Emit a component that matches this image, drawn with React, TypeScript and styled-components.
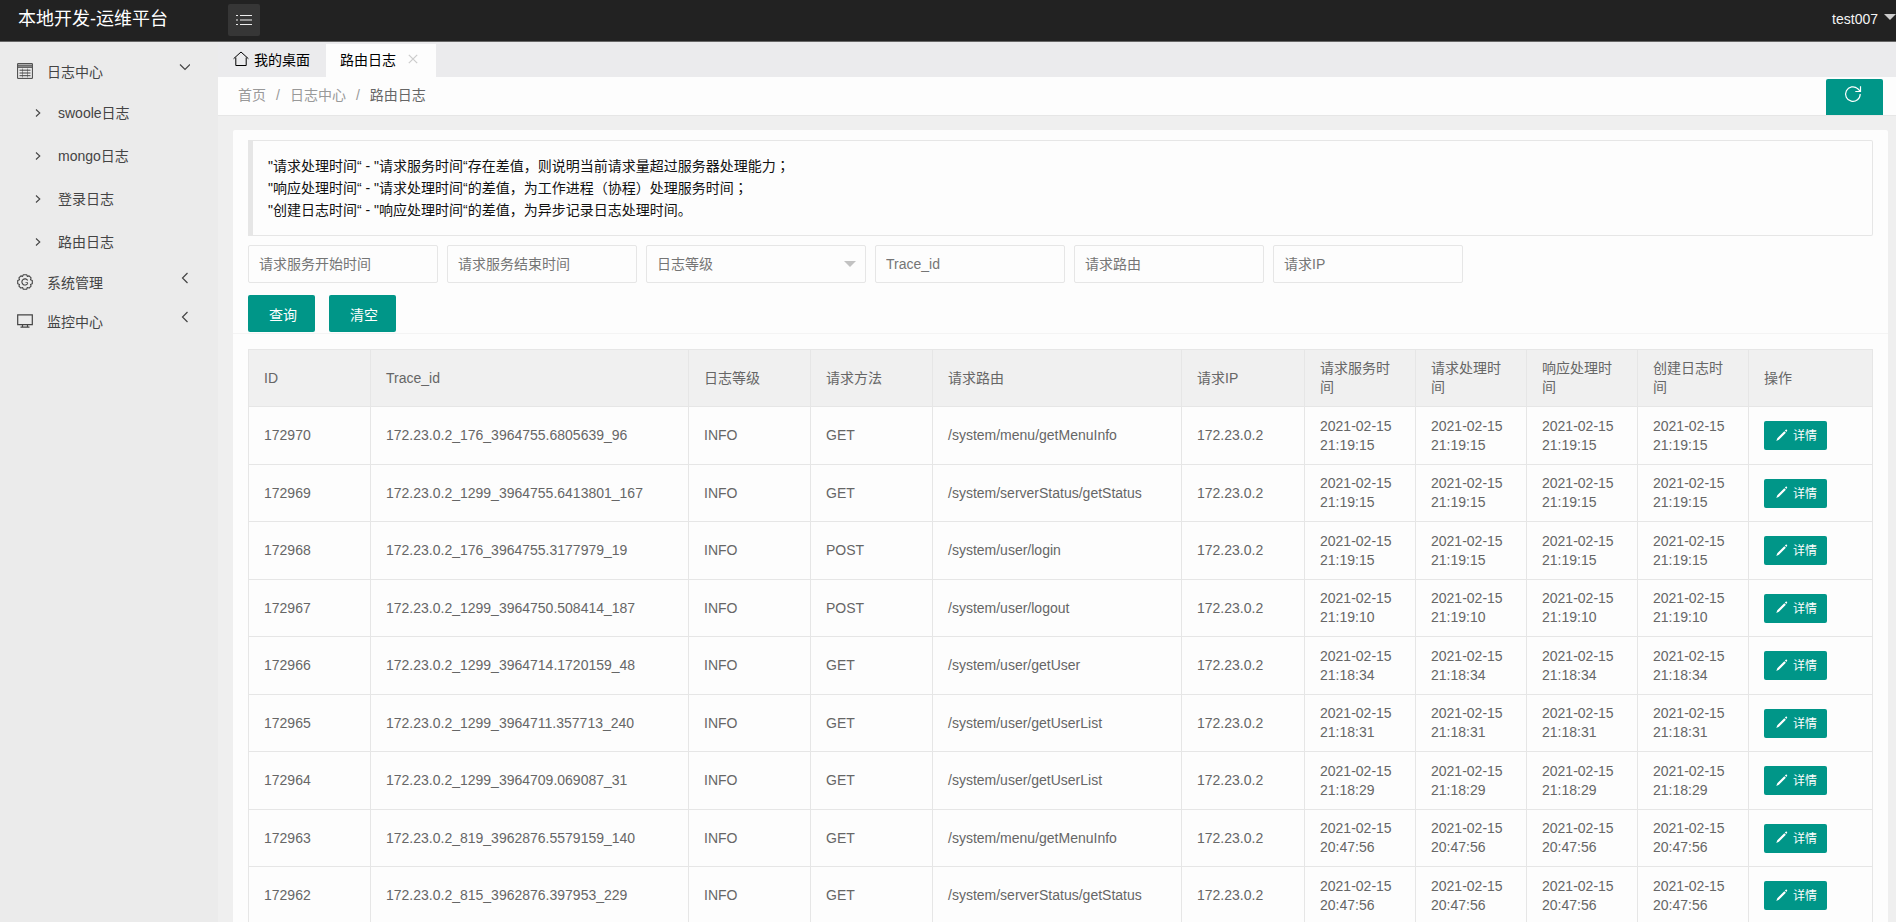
import React from 'react';
import styled, { createGlobalStyle } from 'styled-components';

const GlobalStyle = createGlobalStyle`
  * { box-sizing: border-box; }
  html, body { margin: 0; padding: 0; }
  body, button, input, select {
    font-family: 'Liberation Sans', 'Noto Sans CJK SC', sans-serif;
    font-size: 14px;
  }
  body { background: #efefef; color: #666; overflow: hidden; }
  a { color: inherit; text-decoration: none; }
  ul { list-style: none; margin: 0; padding: 0; }
`;

const teal = '#009688';
const line = '#e6e6e6';

const Page = styled.div`
  display: flex;
  flex-direction: column;
  height: 100vh;
`;

const Header = styled.header`
  display: flex;
  align-items: flex-start;
  flex: none;
  height: 42px;
  background: #222;
  border-bottom: 1px solid #666;
  color: #fff;
`;

const Brand = styled.h1`
  width: 228px;
  margin: 0;
  padding-left: 18px;
  font-size: 18px;
  font-weight: 400;
  line-height: 38px;
`;

const MenuToggle = styled.button`
  display: flex;
  align-items: center;
  justify-content: center;
  width: 32px;
  height: 32px;
  margin-top: 4px;
  padding: 0;
  border: 0;
  border-radius: 2px;
  background: #363636;
  color: #eee;
`;

const UserMenu = styled.button`
  display: flex;
  align-items: center;
  gap: 6px;
  height: 38px;
  margin-left: auto;
  padding: 0;
  border: 0;
  background: none;
  color: #f4f4f4;
`;

const Caret = styled.span<{ $color: string; $raised?: boolean }>`
  border: 6px solid transparent;
  border-top-color: ${(p) => p.$color};
  border-bottom-width: 0;
  margin-bottom: ${(p) => (p.$raised ? 4 : 0)}px;
`;

const Body = styled.div`
  display: flex;
  flex: 1;
  min-height: 0;
`;

const Sidebar = styled.nav`
  flex: none;
  width: 218px;
  padding-top: 9px;
  background: #ebebeb;
  color: #444;
`;

const MenuLink = styled.a`
  display: flex;
  align-items: center;
  height: 39px;
  padding: 0 28px 0 17px;
`;

const MenuText = styled.span`
  flex: 1;
  padding-left: 14px;
`;

const MenuChevron = styled.span`
  display: flex;
  padding-bottom: 8px;
`;

const SubLink = styled.a`
  display: flex;
  align-items: center;
  gap: 17px;
  height: 43px;
  padding-left: 35px;
`;

const Content = styled.div`
  display: flex;
  flex: 1;
  flex-direction: column;
  min-width: 0;
`;

const Tabs = styled.div`
  display: flex;
  flex: none;
  align-items: flex-end;
  height: 35px;
  background: #ebebed;
  color: #000;
`;

const Tab = styled.button<{ $active?: boolean }>`
  display: flex;
  align-items: center;
  gap: ${(p) => (p.$active ? 12 : 5)}px;
  height: 33px;
  padding: 0 ${(p) => (p.$active ? 18 : 16)}px 4px ${(p) => (p.$active ? 14 : 15)}px;
  border: 0;
  background: ${(p) => (p.$active ? '#fdfdfd' : 'transparent')};
  color: #000;
`;

const Crumbs = styled.div`
  display: flex;
  flex: none;
  align-items: flex-end;
  justify-content: space-between;
  height: 39px;
  padding: 0 13px 0 20px;
  background: #fdfdfd;
  border-bottom: 1px solid ${line};
`;

const Trail = styled.nav`
  display: flex;
  gap: 10px;
  height: 38px;
  line-height: 36px;
  color: #999;
`;

const CurrentCrumb = styled.span`
  color: #666;
`;

const RefreshButton = styled.button`
  display: flex;
  align-items: center;
  justify-content: center;
  width: 57px;
  height: 36px;
  padding: 0 3px 6px 0;
  border: 0;
  border-radius: 2px 2px 0 0;
  background: ${teal};
  color: #fff;
`;

const Main = styled.main`
  flex: 1;
  min-height: 0;
  overflow: hidden;
  padding: 14px 8px 0 15px;
`;

const Card = styled.section`
  border-radius: 2px;
  background: #fdfdfd;
`;

const Note = styled.blockquote`
  margin: 0;
  padding: 14px 15px;
  border: 1px solid ${line};
  border-left-width: 5px;
  border-radius: 0 2px 2px 0;
  line-height: 22px;
  color: #111;
`;

const Semicolon = styled.span`
  font-family: 'Noto Sans CJK JP', sans-serif;
  line-height: 1;
`;

const CardTop = styled.div`
  padding: 10px 15px 1px;
  border-bottom: 1px solid #f4f4f4;
`;

const SearchForm = styled.form`
  margin-top: 9px;
`;

const Fields = styled.div`
  display: flex;
  flex-wrap: wrap;
  gap: 9px;
`;

const Field = styled.input`
  width: 190px;
  height: 38px;
  padding: 0 10px;
  border: 1px solid ${line};
  border-radius: 2px;
  background: #fdfdfd;
  outline: 0;
  &::placeholder { color: #757575; opacity: 1; }
`;

const SelectBox = styled.div`
  display: grid;
  width: 220px;
  align-items: center;
  & > * { grid-area: 1 / 1; }
  & > span { justify-self: end; margin-right: 10px; pointer-events: none; }
`;

const Select = styled.select`
  width: 100%;
  height: 38px;
  padding: 0 10px;
  border: 1px solid ${line};
  border-radius: 2px;
  background: #fdfdfd;
  color: #757575;
  appearance: none;
`;

const Actions = styled.div`
  display: flex;
  gap: 14px;
  margin-top: 12px;
`;

const ActionButton = styled.button`
  height: 37px;
  padding: 0 18px 0 21px;
  border: 0;
  border-radius: 2px;
  background: ${teal};
  color: #fff;
`;

const CardBody = styled.div`
  padding: 15px;
`;

const Table = styled.table`
  width: 100%;
  table-layout: fixed;
  border-collapse: collapse;
  line-height: 19px;

  th, td {
    padding: 0 15px;
    border: 1px solid ${line};
    text-align: left;
    font-weight: 400;
  }
  thead tr { height: 57px; background: #f0f0f0; }
  tbody tr { height: 57px; }
  tbody tr:nth-child(odd) { height: 58px; }
`;

const DetailButton = styled.button`
  display: flex;
  align-items: center;
  gap: 5px;
  height: 29px;
  padding: 0 10px 2px 12px;
  border: 0;
  border-radius: 2px;
  background: ${teal};
  color: #fff;
  font-size: 12px;
`;

const Stroke = ({ w, h, d, sw = 1 }: { w: number; h: number; d: string; sw?: number }) => (
  <svg width={w} height={h} viewBox={`0 0 ${w} ${h}`} fill="none" stroke="currentColor" strokeWidth={sw} aria-hidden="true">
    <path d={d} />
  </svg>
);

const ListIcon = () => <Stroke w={16} h={12} d="M0 1.5h2M4 1.5h12M0 6h2M4 6h12M0 10.5h2M4 10.5h12" sw={1.2} />;
const HomeIcon = () => <Stroke w={16} h={16} d="M.6 7.700 8 1l7.400 6.700M2.800 6.500v8h10.400v-8" />;
const CloseIcon = () => (
  <svg width="10" height="10" viewBox="0 0 10 10" fill="none" stroke="#ccc" strokeWidth="1.2" aria-hidden="true">
    <path d="M.8.8l8.4 8.4M9.2.8.8 9.2" />
  </svg>
);
const DownIcon = () => <Stroke w={12} h={8} d="M2 1.500l5 5 5-5" sw={1.200} />;
const LeftIcon = () => <Stroke w={9} h={12} d="M6.500 1l-5 5 5 5" sw={1.200} />;
const RightIcon = () => <Stroke w={6} h={10} d="M1 2.500 4.800 6 1 9.500" sw={1.100} />;
const LogIcon = () => (
  <svg width="16" height="16" viewBox="0 0 16 16" fill="none" stroke="currentColor" aria-hidden="true">
    <path d="M.6.6h14.800v14.800H.6z" />
    <path d="M1 2.700h14" strokeWidth="2.200" opacity=".75" />
    <path d="M1 4.500h14" strokeWidth=".8" />
    <path d="M2.500 7.200h11M2.500 10h11M2.500 12.700h11" strokeWidth="1" />
    <path d="M5.500 5.500v9M10.500 5.500v9" strokeWidth=".5" />
  </svg>
);
const GearIcon = () => (
  <svg width="16" height="16" viewBox="0 0 16 16" fill="none" stroke="currentColor" strokeWidth="1.1" strokeLinejoin="round" aria-hidden="true">
    <path d="M6.300.8h3.400l.6 1.600 1.800-.5 2 2-.6 1.800 1.800.8v3.200l-1.800.7.6 1.700-2 2-1.800-.6-.6 1.700H6.300l-.7-1.700-1.700.6-2-2 .6-1.700-1.800-.7V6.500l1.800-.8-.6-1.800 2-2 1.700.5z" />
    <path d="M10.800 9.200A3.100 3.100 0 1 1 10.700 6.500" />
    <path d="M8.500 8.500h2.500" strokeWidth=".7" />
  </svg>
);
const MonitorIcon = () => <Stroke w={16} h={14} d="M.7.900h14.600v9.700H.7zM5.500 10.800v2M10.500 10.800v2M3.500 13.200h9" sw={1.2} />;
const RefreshIcon = () => <Stroke w={18} h={18} d="M16.200 9a7.300 7.300 0 1 1-2.500-5.400M16.500 1.200v5.300h-5.200M13.500 3.500l2.900 2.900" sw={1.2} />;
const PencilIcon = () => (
  <svg width="12" height="12" viewBox="0 0 12 12" fill="currentColor" aria-hidden="true">
    <path d="M.3 11.900l1-2.700L8.300 2.200l1.600 1.600-7 7zM8.900 1.600l.8-.8q.6-.5 1.200 0 .6.700.1 1.300l-.7.800z" />
  </svg>
);

const subItems = ['swoole日志', 'mongo日志', '登录日志', '路由日志'];

const columns: [string, number][] = [
  ['ID', 122], ['Trace_id', 318], ['日志等级', 122], ['请求方法', 122], ['请求路由', 249], ['请求IP', 123],
  ['请求服务时间', 111], ['请求处理时间', 111], ['响应处理时间', 111], ['创建日志时间', 111], ['操作', 124],
];

const rows = [
  ['172970', '172.23.0.2_176_3964755.6805639_96', 'GET', '/system/menu/getMenuInfo', '21:19:15'],
  ['172969', '172.23.0.2_1299_3964755.6413801_167', 'GET', '/system/serverStatus/getStatus', '21:19:15'],
  ['172968', '172.23.0.2_176_3964755.3177979_19', 'POST', '/system/user/login', '21:19:15'],
  ['172967', '172.23.0.2_1299_3964750.508414_187', 'POST', '/system/user/logout', '21:19:10'],
  ['172966', '172.23.0.2_1299_3964714.1720159_48', 'GET', '/system/user/getUser', '21:18:34'],
  ['172965', '172.23.0.2_1299_3964711.357713_240', 'GET', '/system/user/getUserList', '21:18:31'],
  ['172964', '172.23.0.2_1299_3964709.069087_31', 'GET', '/system/user/getUserList', '21:18:29'],
  ['172963', '172.23.0.2_819_3962876.5579159_140', 'GET', '/system/menu/getMenuInfo', '20:47:56'],
  ['172962', '172.23.0.2_815_3962876.397953_229', 'GET', '/system/serverStatus/getStatus', '20:47:56'],
];

const timeColumns = ['service', 'handle', 'response', 'created'];

export default function App() {
  return (
    <Page>
      <GlobalStyle />
      <Header>
        <Brand>本地开发-运维平台</Brand>
        <MenuToggle aria-label="菜单"><ListIcon /></MenuToggle>
        <UserMenu>test007<Caret $color="#ccc" $raised /></UserMenu>
      </Header>
      <Body>
        <Sidebar>
          <ul>
            <li>
              <MenuLink href="#log"><LogIcon /><MenuText>日志中心</MenuText><MenuChevron><DownIcon /></MenuChevron></MenuLink>
              <ul>
                {subItems.map((name) => (
                  <li key={name}><SubLink href="#sub"><RightIcon />{name}</SubLink></li>
                ))}
              </ul>
            </li>
            <li><MenuLink href="#system"><GearIcon /><MenuText>系统管理</MenuText><MenuChevron><LeftIcon /></MenuChevron></MenuLink></li>
            <li><MenuLink href="#monitor"><MonitorIcon /><MenuText>监控中心</MenuText><MenuChevron><LeftIcon /></MenuChevron></MenuLink></li>
          </ul>
        </Sidebar>
        <Content>
          <Tabs>
            <Tab><HomeIcon />我的桌面</Tab>
            <Tab $active>路由日志<CloseIcon /></Tab>
          </Tabs>
          <Crumbs>
            <Trail>
              <a href="#home">首页</a><span>/</span><a href="#log">日志中心</a><span>/</span><CurrentCrumb>路由日志</CurrentCrumb>
            </Trail>
            <RefreshButton aria-label="刷新"><RefreshIcon /></RefreshButton>
          </Crumbs>
          <Main>
            <Card>
              <CardTop>
                <Note>
                  "请求处理时间“ - "请求服务时间“存在差值，则说明当前请求量超过服务器处理能力<Semicolon>；</Semicolon><br />
                  "响应处理时间“ - "请求处理时间“的差值，为工作进程（协程）处理服务时间<Semicolon>；</Semicolon><br />
                  "创建日志时间“ - "响应处理时间“的差值，为异步记录日志处理时间。
                </Note>
                <SearchForm onSubmit={(e) => e.preventDefault()}>
                  <Fields>
                    <Field aria-label="请求服务开始时间" placeholder="请求服务开始时间" />
                    <Field aria-label="请求服务结束时间" placeholder="请求服务结束时间" />
                    <SelectBox>
                      <Select aria-label="日志等级" defaultValue="">
                        <option value="">日志等级</option>
                        <option value="INFO">INFO</option>
                      </Select>
                      <Caret $color="#c2c2c2" />
                    </SelectBox>
                    <Field aria-label="Trace_id" placeholder="Trace_id" />
                    <Field aria-label="请求路由" placeholder="请求路由" />
                    <Field aria-label="请求IP" placeholder="请求IP" />
                  </Fields>
                  <Actions>
                    <ActionButton type="submit">查询</ActionButton>
                    <ActionButton type="reset">清空</ActionButton>
                  </Actions>
                </SearchForm>
              </CardTop>
              <CardBody>
                <Table>
                  <colgroup>
                    {columns.map(([name, width]) => <col key={name} style={{ width }} />)}
                  </colgroup>
                  <thead>
                    <tr>{columns.map(([name]) => <th key={name} scope="col">{name}</th>)}</tr>
                  </thead>
                  <tbody>
                    {rows.map(([id, trace, method, route, time]) => (
                      <tr key={id}>
                        <td>{id}</td>
                        <td>{trace}</td>
                        <td>INFO</td>
                        <td>{method}</td>
                        <td>{route}</td>
                        <td>172.23.0.2</td>
                        {timeColumns.map((key) => <td key={key}>2021-02-15 {time}</td>)}
                        <td><DetailButton><PencilIcon />详情</DetailButton></td>
                      </tr>
                    ))}
                  </tbody>
                </Table>
              </CardBody>
            </Card>
          </Main>
        </Content>
      </Body>
    </Page>
  );
}
